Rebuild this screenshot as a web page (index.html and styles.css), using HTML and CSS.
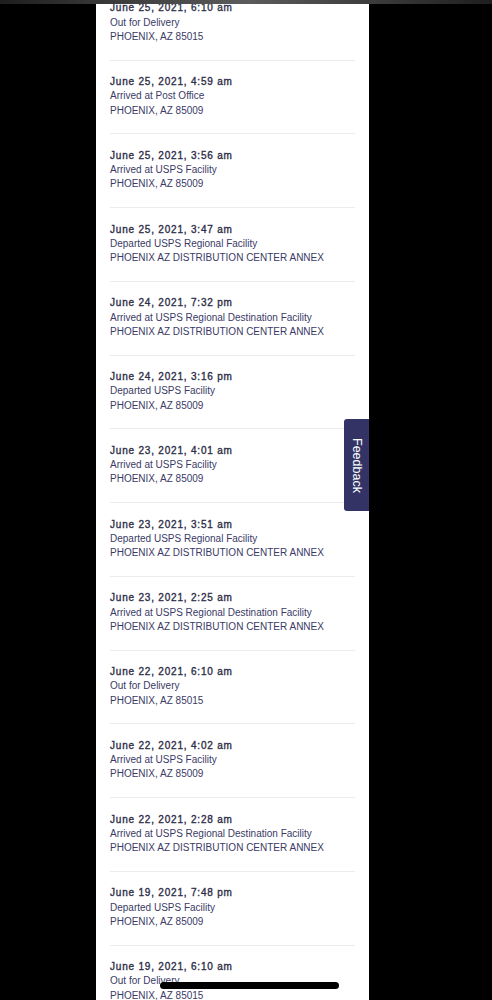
FILE: index.html
```html
<!DOCTYPE html>
<html lang="en">
<head>
    <meta charset="UTF-8">
    <meta name="viewport" content="width=device-width, initial-scale=1.0">
    <title>Tracking History</title>
    <link rel="stylesheet" href="styles.css">
</head>
<body>
    <div class="status-strip"></div>

    <div class="page">
        <ul class="history">
            <li class="event">
                <div class="event-date">June 25, 2021, 6:10 am</div>
                <div class="event-status">Out for Delivery</div>
                <div class="event-place">PHOENIX, AZ 85015</div>
            </li>
            <li class="event">
                <div class="event-date">June 25, 2021, 4:59 am</div>
                <div class="event-status">Arrived at Post Office</div>
                <div class="event-place">PHOENIX, AZ 85009</div>
            </li>
            <li class="event">
                <div class="event-date">June 25, 2021, 3:56 am</div>
                <div class="event-status">Arrived at USPS Facility</div>
                <div class="event-place">PHOENIX, AZ 85009</div>
            </li>
            <li class="event">
                <div class="event-date">June 25, 2021, 3:47 am</div>
                <div class="event-status">Departed USPS Regional Facility</div>
                <div class="event-place">PHOENIX AZ DISTRIBUTION CENTER ANNEX</div>
            </li>
            <li class="event">
                <div class="event-date">June 24, 2021, 7:32 pm</div>
                <div class="event-status">Arrived at USPS Regional Destination Facility</div>
                <div class="event-place">PHOENIX AZ DISTRIBUTION CENTER ANNEX</div>
            </li>
            <li class="event">
                <div class="event-date">June 24, 2021, 3:16 pm</div>
                <div class="event-status">Departed USPS Facility</div>
                <div class="event-place">PHOENIX, AZ 85009</div>
            </li>
            <li class="event">
                <div class="event-date">June 23, 2021, 4:01 am</div>
                <div class="event-status">Arrived at USPS Facility</div>
                <div class="event-place">PHOENIX, AZ 85009</div>
            </li>
            <li class="event">
                <div class="event-date">June 23, 2021, 3:51 am</div>
                <div class="event-status">Departed USPS Regional Facility</div>
                <div class="event-place">PHOENIX AZ DISTRIBUTION CENTER ANNEX</div>
            </li>
            <li class="event">
                <div class="event-date">June 23, 2021, 2:25 am</div>
                <div class="event-status">Arrived at USPS Regional Destination Facility</div>
                <div class="event-place">PHOENIX AZ DISTRIBUTION CENTER ANNEX</div>
            </li>
            <li class="event">
                <div class="event-date">June 22, 2021, 6:10 am</div>
                <div class="event-status">Out for Delivery</div>
                <div class="event-place">PHOENIX, AZ 85015</div>
            </li>
            <li class="event">
                <div class="event-date">June 22, 2021, 4:02 am</div>
                <div class="event-status">Arrived at USPS Facility</div>
                <div class="event-place">PHOENIX, AZ 85009</div>
            </li>
            <li class="event">
                <div class="event-date">June 22, 2021, 2:28 am</div>
                <div class="event-status">Arrived at USPS Regional Destination Facility</div>
                <div class="event-place">PHOENIX AZ DISTRIBUTION CENTER ANNEX</div>
            </li>
            <li class="event">
                <div class="event-date">June 19, 2021, 7:48 pm</div>
                <div class="event-status">Departed USPS Facility</div>
                <div class="event-place">PHOENIX, AZ 85009</div>
            </li>
            <li class="event">
                <div class="event-date">June 19, 2021, 6:10 am</div>
                <div class="event-status">Out for Delivery</div>
                <div class="event-place">PHOENIX, AZ 85015</div>
            </li>
        </ul>
    </div>

    <!-- Side tab -->
    <button class="feedback-tab"><span>Feedback</span></button>

    <div class="home-indicator"></div>
</body>
</html>
```

FILE: styles.css
```css
/* General Styles */
html,
body {
    height: 100%;
    overflow: hidden;
}

body {
    margin: 0;
    background: #000;
    font-family: 'Liberation Sans', Arial, Helvetica, sans-serif;
    font-size: 10px;
    color: #333366;
}

.page {
    width: 245px;
    min-height: 100%;
    margin-left: 96px;
    padding: 0 14px;
    background: #fff;
}

/* Tracking list */
.history {
    list-style: none;
    margin: -13.25px 0 0;
    padding: 0;
}

.event {
    padding: 14.5px 0 15.5px;
    border-bottom: 1px solid #ececec;
    line-height: 14.25px;
}

.event-date {
    letter-spacing: 0.8px;
    color: #2e2e48;
    -webkit-text-stroke: 0.35px #2e2e48;
}

.event-status,
.event-place {
    color: #3a3a66;
    white-space: nowrap;
}

/* Overlays */
.status-strip {
    position: fixed;
    top: 0;
    left: 0;
    right: 0;
    height: 4px;
    background: linear-gradient(to right, #1e1e1e, #5c5c5c 50%, #1e1e1e);
    z-index: 3;
}

.feedback-tab {
    position: fixed;
    top: 419px;
    left: 344px;
    width: 25px;
    height: 92px;
    padding: 0;
    border: none;
    border-radius: 3px 0 0 3px;
    background: #333366;
    color: #fff;
    font-family: 'Liberation Sans', Arial, sans-serif;
    font-size: 12.5px;
    display: flex;
    align-items: center;
    justify-content: center;
    cursor: pointer;
}

.feedback-tab span {
    writing-mode: vertical-rl;
}

.home-indicator {
    position: fixed;
    bottom: 11px;
    left: 160px;
    width: 179px;
    height: 7px;
    border-radius: 4px;
    background: #000;
}
```
